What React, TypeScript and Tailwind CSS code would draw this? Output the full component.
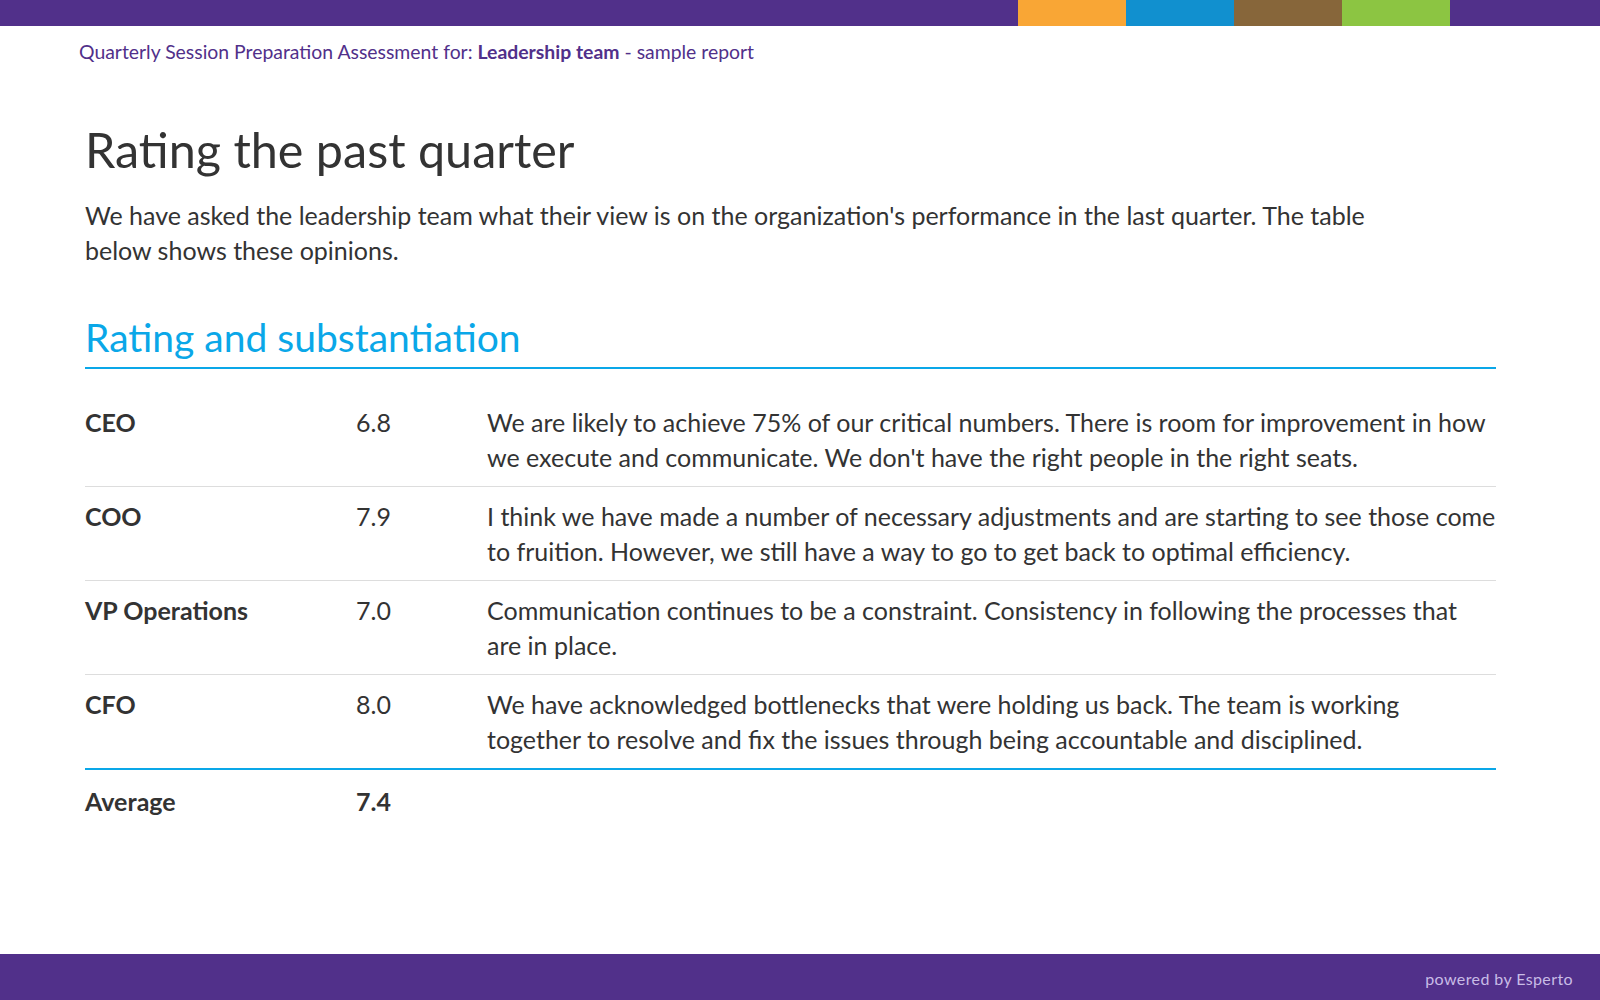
const rows = [
  {
    role: "CEO",
    score: "6.8",
    text: "We are likely to achieve 75% of our critical numbers. There is room for improvement in how we execute and communicate. We don't have the right people in the right seats.",
  },
  {
    role: "COO",
    score: "7.9",
    text: "I think we have made a number of necessary adjustments and are starting to see those come to fruition. However, we still have a way to go to get back to optimal efficiency.",
  },
  {
    role: "VP Operations",
    score: "7.0",
    text: "Communication continues to be a constraint. Consistency in following the processes that are in place.",
  },
  {
    role: "CFO",
    score: "8.0",
    text: "We have acknowledged bottlenecks that were holding us back. The team is working together to resolve and fix the issues through being accountable and disciplined.",
  },
];

export default function App() {
  return (
    <div className="flex h-screen flex-col bg-white font-['Lato',sans-serif] text-[#333333]">
      {/* top strip */}
      <div className="flex h-[26px]">
        <div className="flex-1 bg-[#51308a]"></div>
        <div className="w-[108px] bg-[#f9a635]"></div>
        <div className="w-[108px] bg-[#1190cf]"></div>
        <div className="w-[108px] bg-[#87663a]"></div>
        <div className="w-[108px] bg-[#8cc542]"></div>
        <div className="w-[150px] bg-[#51308a]"></div>
      </div>

      <header className="pl-[79px] pt-[13px] text-[19.4px] leading-[26px] text-[#51308a]">
        Quarterly Session Preparation Assessment for: <span className="font-bold">Leadership team</span> - sample report
      </header>

      <main className="flex-1 pl-[85px] pr-[104px]">
        <h1 className="mt-[55px] text-[48.5px] leading-[58px] font-normal text-[#333333]">Rating the past quarter</h1>
        <p className="mt-[20px] max-w-[1300px] text-[25px] leading-[35px]">
          We have asked the leadership team what their view is on the organization's performance in the last quarter. The table below shows these opinions.
        </p>

        <h2 className="mt-[44px] border-b-2 border-[#0aa7e8] pb-[5px] text-[39px] leading-[50px] text-[#0aa7e8]">
          Rating and substantiation
        </h2>

        <div className="mt-[24px]">
          {rows.map((r, i) => (
            <div
              key={r.role}
              className={
                "grid grid-cols-[271px_131px_1fr] pt-[12px] pb-[11px] text-[25px] leading-[35px] " +
                (i < rows.length - 1 ? "border-b border-[#dddddd]" : "border-b-2 border-[#0aa7e8]")
              }
            >
              <div className="font-bold">{r.role}</div>
              <div>{r.score}</div>
              <div>{r.text}</div>
            </div>
          ))}
          <div className="grid grid-cols-[271px_131px_1fr] pt-[14px] text-[25px] leading-[35px] font-bold">
            <div>Average</div>
            <div>7.4</div>
            <div></div>
          </div>
        </div>
      </main>

      <footer className="flex h-[46px] items-center justify-end bg-[#51308a] pt-[3px] pr-[27px] text-[16px] tracking-[0.4px] text-[#c8bce6]">
        powered by Esperto
      </footer>
    </div>
  );
}
